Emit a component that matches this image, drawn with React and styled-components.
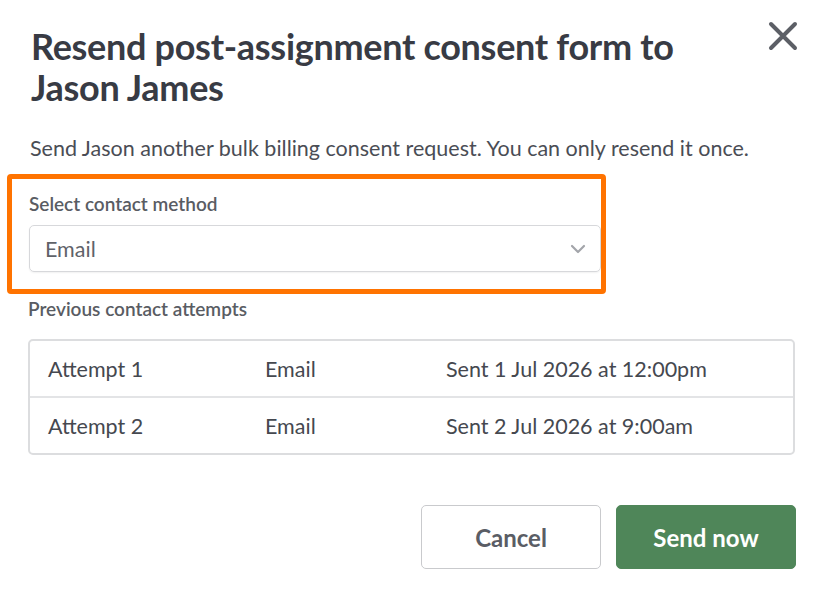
import styled, { createGlobalStyle } from "styled-components";

const GlobalStyle = createGlobalStyle`
  body {
    margin: 0;
    background: #ffffff;
    font-family: Lato, "Open Sans", sans-serif;
    color: #45484f;
  }
`;

const attempts = [
  { id: 1, label: "Attempt 1", method: "Email", sent: "Sent 1 Jul 2026 at 12:00pm" },
  { id: 2, label: "Attempt 2", method: "Email", sent: "Sent 2 Jul 2026 at 9:00am" },
];

const App = () => {
  return (
    <>
      <GlobalStyle />
      <Dialog>
        <Header>
          <Title>Resend post-assignment consent form to Jason James</Title>
          <CloseButton aria-label="Close">
            <svg width="34" height="34" viewBox="0 0 34 34">
              <path
                d="M5 5 L29 29 M29 5 L5 29"
                stroke="#5c5f66"
                strokeWidth="4"
                strokeLinecap="round"
              />
            </svg>
          </CloseButton>
        </Header>

        <Description>
          Send Jason another bulk billing consent request. You can only resend it once.
        </Description>

        <FieldGroup>
          <Highlight />
          <Label>Select contact method</Label>
          <Select>
            <span>Email</span>
            <svg width="16" height="10" viewBox="0 0 16 10">
              <path
                d="M2 2 L8 8 L14 2"
                fill="none"
                stroke="#a3a5aa"
                strokeWidth="2.2"
                strokeLinecap="round"
                strokeLinejoin="round"
              />
            </svg>
          </Select>
        </FieldGroup>

        <SectionLabel>Previous contact attempts</SectionLabel>
        <Table>
          {attempts.map((a) => (
            <Row key={a.id}>
              <span>{a.label}</span>
              <span>{a.method}</span>
              <span>{a.sent}</span>
            </Row>
          ))}
        </Table>

        <Footer>
          <Button>Cancel</Button>
          <Button primary>Send now</Button>
        </Footer>
      </Dialog>
    </>
  );
};

const Dialog = styled.div`
  width: 822px;
  box-sizing: border-box;
  padding: 26px 26px 0 28px;
  display: flex;
  flex-direction: column;
`;

const Header = styled.div`
  display: flex;
  justify-content: space-between;
  align-items: flex-start;
`;

const Title = styled.h1`
  margin: 0 0 0 3px;
  max-width: 670px;
  font-size: 36px;
  line-height: 41px;
  font-weight: 700;
  color: #383b44;
  letter-spacing: -0.3px;
`;

const CloseButton = styled.button`
  border: none;
  background: none;
  padding: 0;
  margin: -7px -4px 0 0;
  cursor: pointer;
  display: flex;
`;

const Description = styled.p`
  margin: 28px 0 0 2px;
  font-size: 21.5px;
  line-height: 24px;
  color: #4a4d55;
`;

const FieldGroup = styled.div`
  position: relative;
  margin-top: 34px;
  display: flex;
  flex-direction: column;
  gap: 11px;
`;

const Highlight = styled.div`
  position: absolute;
  left: -21px;
  top: -20px;
  width: 599px;
  height: 120px;
  box-sizing: border-box;
  border: 5px solid #ff7300;
  border-radius: 4px;
  pointer-events: none;
  z-index: 1;
`;

const Label = styled.div`
  margin-left: 1px;
  font-size: 19px;
  line-height: 20px;
  font-weight: 600;
  color: #595c63;
`;

const Select = styled.div`
  margin-left: 1px;
  width: 572px;
  height: 47px;
  box-sizing: border-box;
  border: 1px solid #d7d8db;
  border-radius: 5px;
  display: flex;
  align-items: center;
  justify-content: space-between;
  padding: 0 14px 0 15px;
  font-size: 21.5px;
  color: #5f6269;
  box-shadow: 0 1px 2px rgba(0, 0, 0, 0.06);
`;

const SectionLabel = styled.div`
  margin-top: 27px;
  font-size: 19px;
  line-height: 20px;
  font-weight: 600;
  color: #595c63;
`;

const Table = styled.div`
  margin-top: 20px;
  width: 767px;
  border: 2px solid #dcdddf;
  border-radius: 5px;
  box-sizing: border-box;
`;

const Row = styled.div`
  display: grid;
  grid-template-columns: 217px 181px 1fr;
  align-items: center;
  height: 55px;
  padding-left: 18px;
  font-size: 21.5px;
  color: #45484f;

  & + & {
    border-top: 2px solid #e3e4e6;
  }
`;

const Footer = styled.div`
  margin-top: 50px;
  display: flex;
  justify-content: flex-end;
  gap: 15px;
  width: 768px;
`;

const Button = styled.button`
  width: 180px;
  height: 64px;
  border-radius: 5px;
  font-family: Lato, "Open Sans", sans-serif;
  font-size: 24px;
  font-weight: 700;
  cursor: pointer;
  border: 1px solid ${(p) => (p.primary ? "#4f8659" : "#c9cacd")};
  background: ${(p) => (p.primary ? "#4f8659" : "#ffffff")};
  color: ${(p) => (p.primary ? "#ffffff" : "#5a5d65")};
`;

export default App;
